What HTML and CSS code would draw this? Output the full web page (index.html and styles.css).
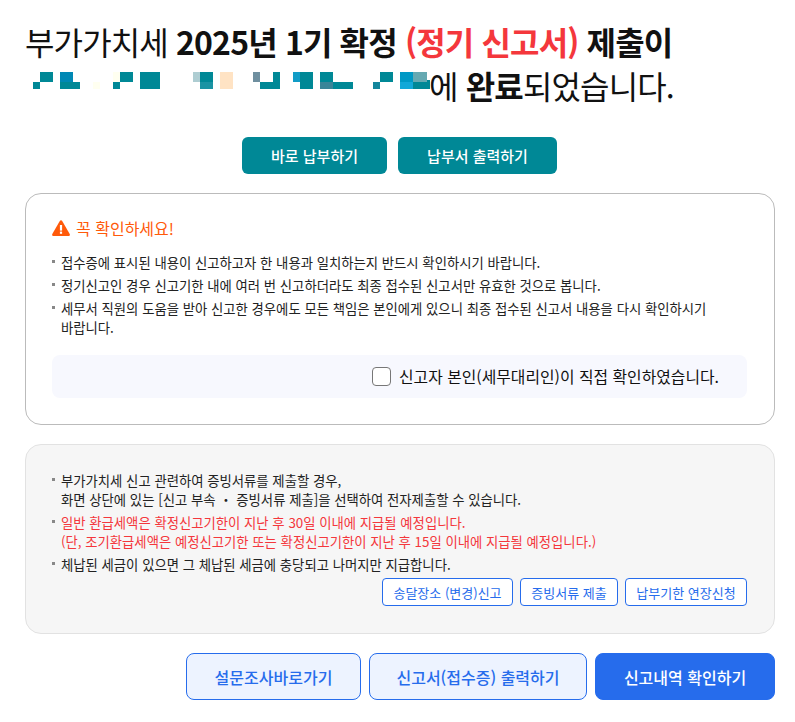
FILE: index.html
```html
<!DOCTYPE html>
<html lang="ko">
<head>
    <meta charset="UTF-8">
    <meta name="viewport" content="width=device-width, initial-scale=1.0">
    <title>신고서 제출 완료</title>
    <link rel="stylesheet" href="styles.css">
</head>
<body>

    <div class="page">
        <h1 class="title">
            <span class="title-line">부가가치세 <strong>2025년 1기 확정</strong> <strong class="red">(정기 신고서)</strong> <strong>제출이</strong></span>
            <span class="title-line">
                <!-- Masked taxpayer name -->
                <svg class="mask" width="403" height="24" viewBox="0 0 403 24" aria-hidden="true">
                    <rect x="13" y="3" width="13" height="10" fill="#008896"/>
                    <rect x="6" y="13" width="7" height="7" fill="#008896"/>
                    <rect x="33" y="3" width="13" height="10" fill="#0088b4"/>
                    <rect x="33" y="13" width="20" height="7" fill="#008896"/>
                    <rect x="66" y="13" width="7" height="7" fill="#fffff0"/>
                    <rect x="86" y="3" width="7" height="10" fill="#fffff0"/>
                    <rect x="93" y="3" width="13" height="10" fill="#008896"/>
                    <rect x="86" y="13" width="7" height="7" fill="#008896"/>
                    <rect x="113" y="3" width="20" height="17" fill="#008896"/>
                    <rect x="166" y="3" width="7" height="10" fill="#aecdd2"/>
                    <rect x="173" y="3" width="13" height="10" fill="#008896"/>
                    <rect x="173" y="13" width="13" height="7" fill="#1a93a3"/>
                    <rect x="193" y="3" width="13" height="17" fill="#ffe3c4"/>
                    <rect x="226" y="3" width="7" height="10" fill="#6f8f9f"/>
                    <rect x="246" y="3" width="7" height="10" fill="#008896"/>
                    <rect x="233" y="13" width="20" height="7" fill="#008896"/>
                    <rect x="266" y="3" width="7" height="10" fill="#119cc6"/>
                    <rect x="273" y="3" width="13" height="17" fill="#008896"/>
                    <rect x="293" y="3" width="13" height="10" fill="#008896"/>
                    <rect x="293" y="13" width="13" height="7" fill="#3a8598"/>
                    <rect x="306" y="13" width="20" height="7" fill="#008896"/>
                    <rect x="353" y="3" width="13" height="10" fill="#008896"/>
                    <rect x="346" y="13" width="7" height="7" fill="#14869c"/>
                    <rect x="373" y="3" width="13" height="10" fill="#0099c5"/>
                    <rect x="373" y="13" width="13" height="7" fill="#12a8d8"/>
                    <rect x="386" y="3" width="14" height="10" fill="#66a9b2"/>
                    <rect x="386" y="13" width="14" height="7" fill="#008896"/>
                    <rect x="400" y="11" width="3" height="9" fill="#008896"/>
                </svg>에 <strong>완료</strong>되었습니다.
            </span>
        </h1>

        <div class="pay-buttons">
            <button class="btn-teal btn-pay">바로 납부하기</button>
            <button class="btn-teal btn-bill">납부서 출력하기</button>
        </div>

        <section class="check-box">
            <h2 class="warn-title">
                <svg width="18" height="16" viewBox="0 0 18 16" aria-hidden="true">
                    <path d="M9 0.3 C9.5 0.3 9.9 0.6 10.2 1 L17.7 14 C18.2 14.9 17.6 16 16.5 16 L1.5 16 C0.4 16 -0.2 14.9 0.3 14 L7.8 1 C8.1 0.6 8.5 0.3 9 0.3 Z" fill="#ff5a0a"/>
                    <rect x="7.9" y="5" width="2.2" height="5.6" fill="#fff"/>
                    <rect x="7.9" y="11.6" width="2.2" height="2.2" fill="#fff"/>
                </svg>
                꼭 확인하세요!
            </h2>
            <ul class="notes">
                <li>접수증에 표시된 내용이 신고하고자 한 내용과 일치하는지 반드시 확인하시기 바랍니다.</li>
                <li>정기신고인 경우 신고기한 내에 여러 번 신고하더라도 최종 접수된 신고서만 유효한 것으로 봅니다.</li>
                <li class="wrap">세무서 직원의 도움을 받아 신고한 경우에도 모든 책임은 본인에게 있으니 최종 접수된 신고서 내용을 다시 확인하시기 바랍니다.</li>
            </ul>
            <label class="confirm">
                <input type="checkbox">
                <span>신고자 본인(세무대리인)이 직접 확인하였습니다.</span>
            </label>
        </section>

        <section class="info-box">
            <ul class="notes">
                <li>부가가치세 신고 관련하여 증빙서류를 제출할 경우,<br>화면 상단에 있는 [신고 부속 ・ 증빙서류 제출]을 선택하여 전자제출할 수 있습니다.</li>
                <li class="red">일반 환급세액은 확정신고기한이 지난 후 30일 이내에 지급될 예정입니다.<br>(단, 조기환급세액은 예정신고기한 또는 확정신고기한이 지난 후 15일 이내에 지급될 예정입니다.)</li>
                <li>체납된 세금이 있으면 그 체납된 세금에 충당되고 나머지만 지급합니다.</li>
            </ul>
            <div class="small-buttons">
                <button class="btn-small">송달장소 (변경)신고</button>
                <button class="btn-small">증빙서류 제출</button>
                <button class="btn-small">납부기한 연장신청</button>
            </div>
        </section>

        <div class="bottom-buttons">
            <button class="btn-big btn-light btn-survey">설문조사바로가기</button>
            <button class="btn-big btn-light btn-print">신고서(접수증) 출력하기</button>
            <button class="btn-big btn-blue">신고내역 확인하기</button>
        </div>
    </div>

</body>
</html>
```

FILE: styles.css
```css
html, body {
    margin: 0;
    background: #fff;
}

body {
    font-family: "Noto Sans CJK KR", "Noto Sans", sans-serif;
    color: #222;
}

.page {
    padding: 19px 20px 0 25px;
}

/* Title */
.title {
    margin: 0;
    font-size: 32px;
    font-weight: 400;
    color: #111;
    letter-spacing: -0.85px;
}

.title-line {
    display: block;
    line-height: 44px;
    white-space: nowrap;
}

.title strong {
    font-weight: 700;
}

.title .red {
    color: #f4373c;
}

.mask {
    vertical-align: 6px;
    margin-left: 2px;
    margin-right: -1px;
}

/* Teal pay buttons */
.pay-buttons {
    display: flex;
    justify-content: center;
    gap: 11px;
    margin-top: 30px;
    padding-right: 1px;
}

button {
    font-family: inherit;
    cursor: pointer;
}

.btn-teal {
    height: 37px;
    padding: 0;
    background: #008896;
    color: #fff;
    border: none;
    border-radius: 6px;
    font-size: 15px;
    font-weight: 500;
}

.btn-pay {
    width: 145px;
}

.btn-bill {
    width: 159px;
}

/* Boxes */
.check-box {
    margin-top: 19px;
    height: 232px;
    box-sizing: border-box;
    padding: 22px 27px 0 26px;
    border: 1px solid #bbb;
    border-radius: 16px;
}

.warn-title {
    display: flex;
    align-items: center;
    gap: 6px;
    margin: 0 0 13px;
    font-size: 16px;
    font-weight: 400;
    line-height: 24px;
    color: #ff5a0a;
}

.notes {
    list-style: none;
    margin: 0;
    padding: 0;
    font-size: 13.35px;
    line-height: 19px;
    color: #222;
}

.notes li {
    position: relative;
    padding-left: 9px;
    margin-bottom: 4px;
}

.notes li::before {
    content: "";
    position: absolute;
    left: 0;
    top: 7px;
    width: 3px;
    height: 3px;
    background: #888;
}

.notes .red {
    color: #f4373c;
}

.notes .wrap {
    padding-right: 30px;
}

.confirm {
    display: flex;
    justify-content: flex-end;
    align-items: center;
    gap: 8px;
    height: 43px;
    margin-top: 18px;
    padding-right: 28px;
    background: #f7f8fe;
    border-radius: 8px;
    font-size: 15.85px;
    color: #111;
}

.confirm input {
    appearance: none;
    width: 19px;
    height: 19px;
    margin: 0;
    background: #fff;
    border: 1px solid #777;
    border-radius: 4px;
}

.info-box {
    margin-top: 19px;
    height: 190px;
    box-sizing: border-box;
    padding: 26px 27px 0 26px;
    background: #f6f6f6;
    border: 1px solid #e2e2e2;
    border-radius: 16px;
}

.small-buttons {
    display: flex;
    justify-content: flex-end;
    gap: 7px;
}

.btn-small {
    height: 28px;
    padding: 0;
    background: #fff;
    color: #266cec;
    border: 1px solid #266cec;
    border-radius: 4px;
    font-size: 13px;
}

.btn-small:nth-child(1) {
    width: 131px;
}

.btn-small:nth-child(2) {
    width: 98px;
}

.btn-small:nth-child(3) {
    width: 122px;
}

/* Bottom buttons */
.bottom-buttons {
    display: flex;
    justify-content: flex-end;
    gap: 8px;
    margin-top: 19px;
}

.btn-big {
    height: 47px;
    padding: 0;
    border-radius: 8px;
    font-size: 16px;
    font-weight: 500;
}

.btn-light {
    background: #edf3ff;
    color: #266cec;
    border: 1px solid #266cec;
}

.btn-survey {
    width: 175px;
}

.btn-print {
    width: 218px;
}

.btn-blue {
    width: 180px;
    background: #266cec;
    color: #fff;
    border: 1px solid #266cec;
}
```
